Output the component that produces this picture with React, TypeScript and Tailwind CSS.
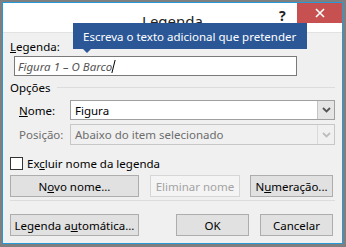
import React from 'react';

const Chevron = ({ color }: { color: string }) => (
  <svg width="9" height="6" viewBox="0 0 9 6" fill="none">
    <path d="M1 1l3.5 3.5L8 1" stroke={color} strokeWidth="1.8" />
  </svg>
);

const Btn = ({ children, className = '' }: { children: React.ReactNode; className?: string }) => (
  <div className={`h-[22px] flex items-center justify-center bg-[#e1e1e1] border border-[#adadad] text-black ${className}`}>
    {children}
  </div>
);

export default function App() {
  return (
    <div
      className="relative w-[346px] h-[247px] bg-[#7f7f7f] pt-[2px] pl-[2px] pr-[3px] pb-[3px] text-[11.5px] leading-[15px] text-black"
      style={{ fontFamily: '"Noto Sans", "Open Sans", sans-serif' }}
    >
      <div className="w-full h-full border border-[#2799d6] bg-[#f0f0f0] flex flex-col">
        {/* title bar */}
        <div className="relative h-[30px] bg-white border-b border-[#e2e2e2] flex justify-center">
          <span className="mt-[8px] text-[15px] leading-[20px] text-[#222]">Legenda</span>
          <span className="absolute left-[276px] top-[4px] text-[14px] leading-[18px] font-bold text-[#222]">?</span>
          <div className="absolute right-0 top-0 w-[45px] h-[20px] bg-[#c75050] flex items-center justify-center">
            <svg width="10" height="10" viewBox="0 0 10 10">
              <path d="M1 1l8 8M9 1l-8 8" stroke="white" strokeWidth="1.6" />
            </svg>
          </div>
        </div>

        <div className="flex flex-col px-[7px]">
          <div className="mt-[6px]">
            <span className="underline">L</span>egenda:
          </div>
          <div className="mt-[2px] ml-[4px] w-[283px] h-[20px] bg-white border border-[#7a7a7a] flex items-center pl-[3px] italic text-[#555]">
            Figura 1 – O Barco
            <span className="inline-block w-px h-[13px] bg-black skew-x-[-14deg] ml-[1px]" />
          </div>

          <div className="mt-[4px] flex items-center gap-[6px]">
            <span>Opções</span>
            <div className="flex-1 h-px bg-[#dcdcdc]" />
          </div>

          <div className="mt-[5px] flex items-center">
            <span className="w-[60px] shrink-0 pl-[9px]">
              <span className="underline">N</span>ome:
            </span>
            <div className="flex-1 h-[20px] bg-white border border-[#a0a0a0] flex items-center">
              <span className="flex-1 pl-[4px]">Figura</span>
              <div className="w-[17px] h-full bg-[#e5e5e5] border-l border-[#c4c4c4] flex items-center justify-center">
                <Chevron color="#555" />
              </div>
            </div>
          </div>

          <div className="mt-[4px] flex items-center text-[#6d6d6d]">
            <span className="w-[60px] shrink-0 pl-[9px] whitespace-nowrap">Posição:</span>
            <div className="flex-1 h-[21px] bg-[#f0f0f0] border border-[#c7c7c7] flex items-center">
              <span className="flex-1 pl-[4px] text-[#6d6d6d]">Abaixo do item selecionado</span>
              <div className="w-[17px] h-full border-l border-[#dadada] flex items-center justify-center">
                <Chevron color="#bdbdbd" />
              </div>
            </div>
          </div>

          <div className="mt-[11px] flex items-center gap-[4px]">
            <div className="w-[13px] h-[13px] bg-white border border-[#333]" />
            <span>
              Ex<span className="underline">c</span>luir nome da legenda
            </span>
          </div>

          <div className="mt-[4px] flex">
            <Btn className="w-[129px]">
              <span>
                N<span className="underline">o</span>vo nome...
              </span>
            </Btn>
            <div className="ml-[11px] w-[90px] h-[22px] flex items-center justify-center bg-[#f4f4f4] border border-[#d6d6d6] text-[#a3a3a3]">
              Eliminar nome
            </div>
            <Btn className="ml-[10px] w-[83px]">
              <span>
                N<span className="underline">u</span>meração...
              </span>
            </Btn>
          </div>

          <div className="mt-[3px] h-px bg-[#dcdcdc]" />

          <div className="mt-[13px] flex">
            <Btn className="w-[129px]">
              <span>
                Legenda a<span className="underline">u</span>tomática...
              </span>
            </Btn>
            <Btn className="ml-[37px] w-[73px] border-[#0078d7]">OK</Btn>
            <Btn className="ml-[11px] w-[73px]">Cancelar</Btn>
          </div>
        </div>
      </div>

      {/* tooltip */}
      <div className="absolute left-[73px] top-[23px] w-[234px] h-[26px] bg-[#2b5797] text-white text-[11.5px] flex items-center pl-[10px]">
        Escreva o texto adicional que pretender
        <div className="absolute left-[9px] top-[25px] w-0 h-0 border-l-[5px] border-r-[5px] border-t-[5px] border-l-transparent border-r-transparent border-t-[#2b5797]" />
      </div>
    </div>
  );
}
